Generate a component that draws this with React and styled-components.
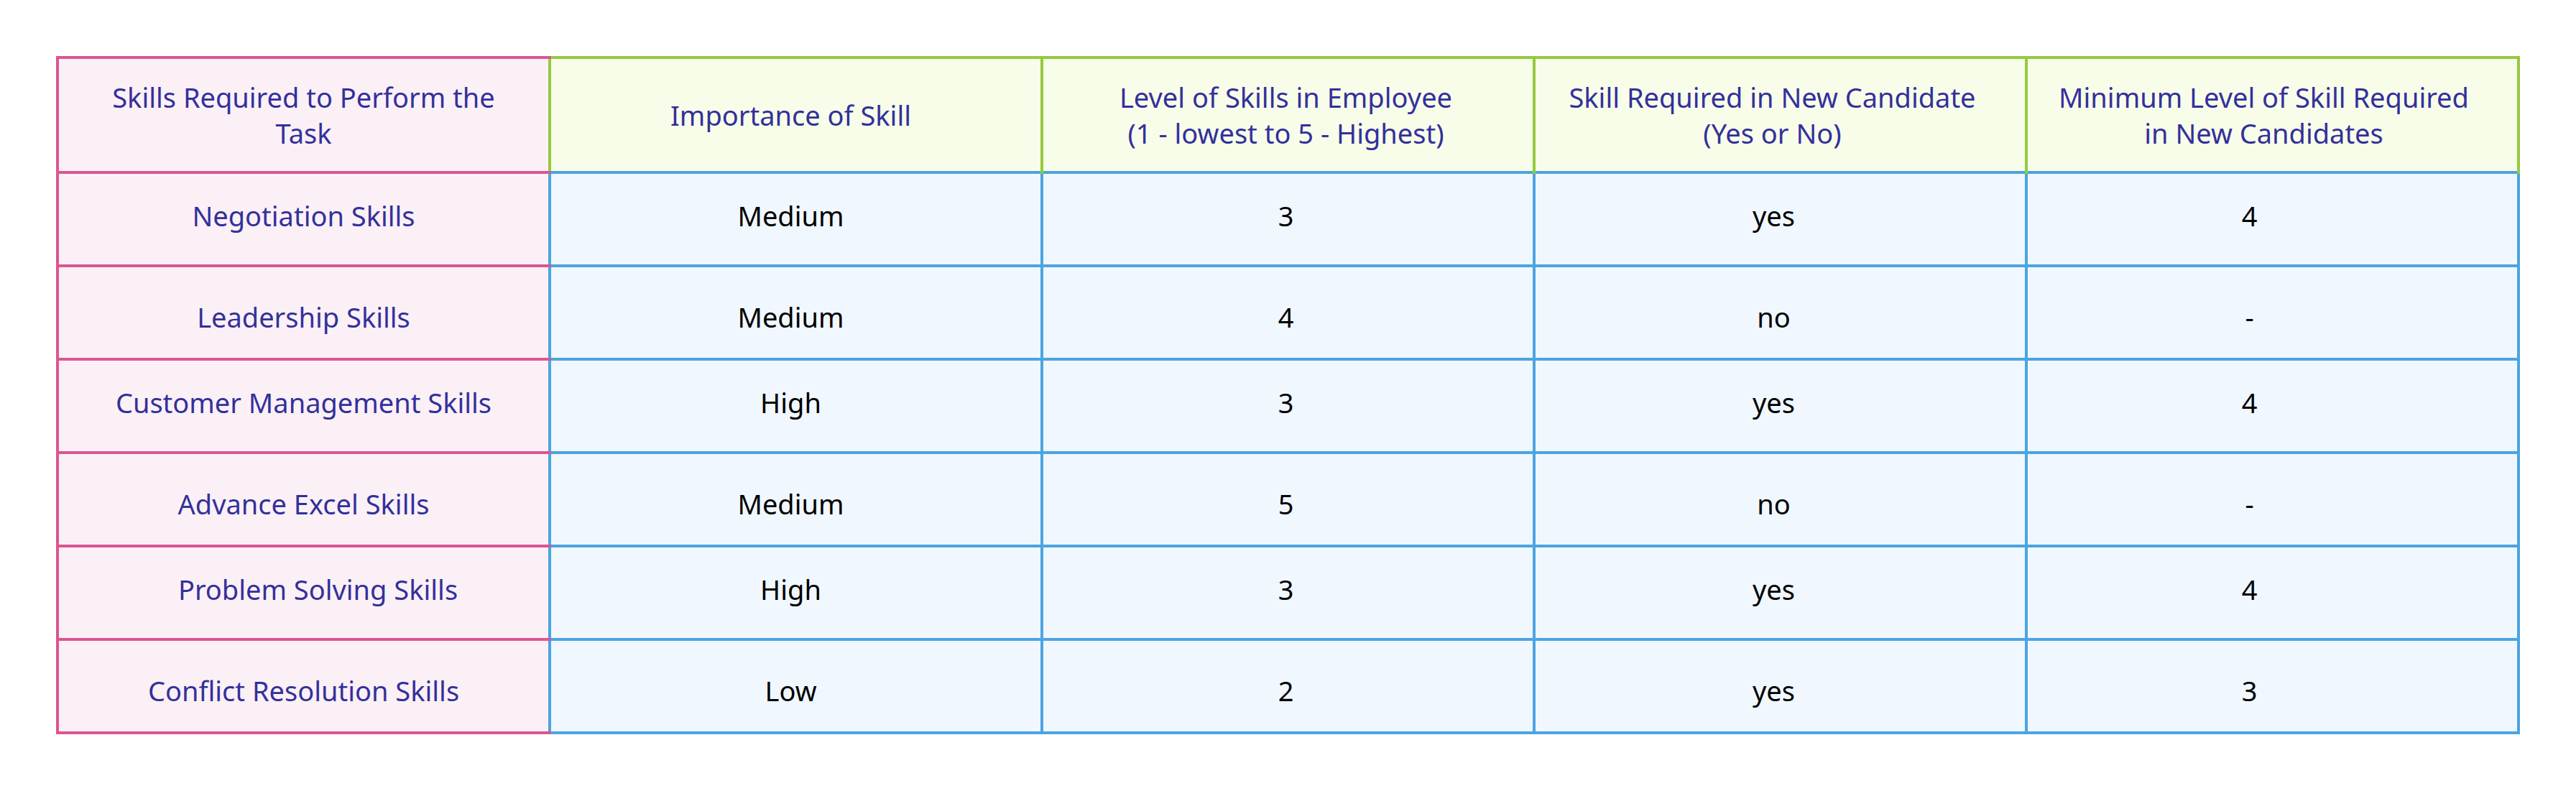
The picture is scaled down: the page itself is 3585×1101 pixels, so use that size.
import React from "react";
import styled, { createGlobalStyle, css } from "styled-components";

const GlobalStyle = createGlobalStyle`
  html, body {
    margin: 0;
    padding: 0;
    background: #ffffff;
  }
  * {
    box-sizing: border-box;
  }
`;

// page wrapper with the white margin around the table
const Page = styled.div`
  padding: 78px;
  font-family: "Noto Sans", "Open Sans", sans-serif;
  background: #ffffff;
`;

const Table = styled.table`
  width: 100%;
  table-layout: fixed;
  border-collapse: collapse;
  font-size: 38px;
  line-height: 1.32;
`;

const HeadRow = styled.tr`
  height: 160px;
`;

const BodyRow = styled.tr`
  height: 130px;
`;

// shared cell look: $nudge shifts the centred text sideways, $lift up/down
const cellBase = css`
  text-align: center;
  vertical-align: middle;
  font-weight: 400;
  padding-top: ${({ $lift = 0 }) => Math.max(0, $lift * 2)}px;
  padding-bottom: ${({ $lift = 0 }) => Math.max(0, -$lift * 2)}px;
  padding-left: ${({ $nudge = 0 }) => 40 + $nudge}px;
  padding-right: ${({ $nudge = 0 }) => 40 - $nudge}px;
`;

const HeadCell = styled.th`
  ${cellBase}
  border: 4px solid #95c93f;
  border-bottom: none;
  background: #f7fde9;
  color: #33309b;

  ${({ $first }) =>
    $first &&
    css`
      border: 4px solid #dc5592;
      border-right: none;
      background: #fbf0f6;
    `}
`;

const Cell = styled.td`
  ${cellBase}
  border: 4px solid #4ca4e1;
  background: #f0f7fe;
  color: #000000;

  ${({ $first }) =>
    $first &&
    css`
      border: 4px solid #dc5592;
      border-right: none;
      background: #fbf0f6;
      color: #33309b;
    `}
`;

const headers = [
  { lines: ["Skills Required to Perform the", "Task"], nudge: 0 },
  { lines: ["Importance of Skill"], nudge: -7 },
  { lines: ["Level of Skills in Employee", "(1 - lowest to 5 - Highest)"], nudge: -3 },
  { lines: ["Skill Required in New Candidate", "(Yes or No)"], nudge: -11 },
  { lines: ["Minimum Level of Skill Required", "in New Candidates"], nudge: -12 },
];

const colNudge = [0, -7, -3, -9, -32];

const rows = [
  ["Negotiation Skills", "Medium", "3", "yes", "4"],
  ["Leadership Skills", "Medium", "4", "no", "-"],
  ["Customer Management Skills", "High", "3", "yes", "4"],
  ["Advance Excel Skills", "Medium", "5", "no", "-"],
  ["Problem Solving Skills", "High", "3", "yes", "4"],
  ["Conflict Resolution Skills", "Low", "2", "yes", "3"],
];

export default function App() {
  return (
    <>
      <GlobalStyle />
      <Page>
        <Table>
          <thead>
            <HeadRow>
              {headers.map((h, i) => (
                <HeadCell key={i} $first={i === 0} $nudge={h.nudge}>
                  {h.lines.map((line, j) => (
                    <React.Fragment key={j}>
                      {j > 0 && <br />}
                      {line}
                    </React.Fragment>
                  ))}
                </HeadCell>
              ))}
            </HeadRow>
          </thead>
          <tbody>
            {rows.map((row, r) => (
              <BodyRow key={r}>
                {row.map((value, c) => (
                  <Cell
                    key={c}
                    $first={c === 0}
                    $lift={r % 2 === 0 ? -5 : 6}
                    $nudge={c === 0 && value.startsWith("Problem") ? 20 : colNudge[c]}
                  >
                    {value}
                  </Cell>
                ))}
              </BodyRow>
            ))}
          </tbody>
        </Table>
      </Page>
    </>
  );
}
